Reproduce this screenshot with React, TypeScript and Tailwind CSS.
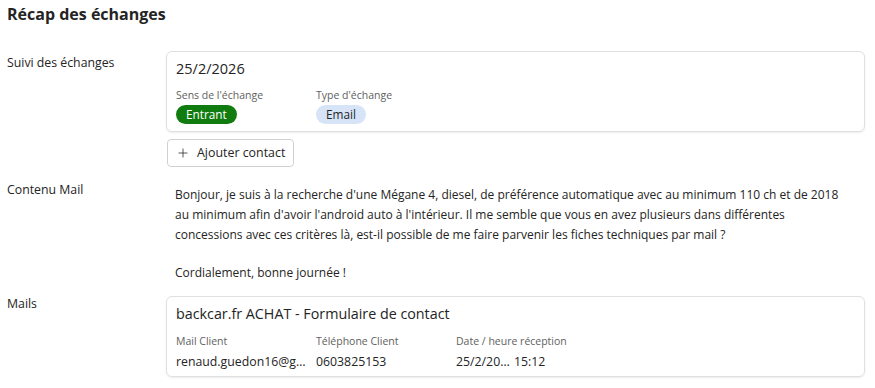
import { Plus } from 'lucide-react';

const font = { fontFamily: '"Open Sans", "Noto Sans", sans-serif' };

function Field({ label, gap = 'gap-[3px]', children }: { label: string; gap?: string; children: React.ReactNode }) {
  return (
    <div className={`flex flex-col ${gap}`}>
      <span className="text-[10.5px] leading-[14px] text-[#616161]">{label}</span>
      {children}
    </div>
  );
}

export default function App() {
  return (
    <div className="w-[875px] h-[388px] bg-white text-[#242424] pl-[7px] pr-[10px] pt-[3px] overflow-hidden" style={font}>
      <h1 className="text-[16px] leading-[22px] font-bold">Récap des échanges</h1>

      <div className="grid grid-cols-[159px_1fr] mt-[26px]">
        {/* Suivi */}
        <div className="pt-[3px] text-[12.3px] leading-[18px]">Suivi des échanges</div>
        <div className="flex flex-col items-start">
          <div className="w-full rounded-[6px] border border-[#e0e0e0] shadow-[0_1px_2px_rgba(0,0,0,0.08)] px-[9px] pt-[6px] pb-[7px]">
            <div className="text-[14.5px] leading-[22px]">25/2/2026</div>
            <div className="flex mt-[8px]">
              <div className="w-[140px]">
                <Field label="Sens de l'échange">
                  <span className="self-start rounded-full bg-[#107c10] text-white text-[11.8px] leading-[19px] px-[10px]">Entrant</span>
                </Field>
              </div>
              <Field label="Type d'échange">
                <span className="self-start rounded-full bg-[#d7e4f8] text-[#242424] text-[11.8px] leading-[19px] px-[10px]">Email</span>
              </Field>
            </div>
          </div>
          <button className="mt-[7px] ml-px h-[28px] flex items-center gap-[7px] pl-[8px] pr-[8px] rounded-[4px] border border-[#d1d1d1] bg-white text-[12.4px] text-[#242424]">
            <Plus size={14} strokeWidth={1.3} />
            Ajouter contact
          </button>
        </div>

        {/* Contenu */}
        <div className="pt-[14px] text-[12.3px] leading-[18px]">Contenu Mail</div>
        <div className="pt-[18px] pl-[9px] text-[12px] leading-[20px]">
          <p>
            Bonjour, je suis à la recherche d'une Mégane 4, diesel, de préférence automatique avec au minimum 110 ch et de 2018
            <br />
            au minimum afin d'avoir l'android auto à l'intérieur. Il me semble que vous en avez plusieurs dans différentes
            <br />
            concessions avec ces critères là, est-il possible de me faire parvenir les fiches techniques par mail ?
          </p>
          <p className="mt-[18px]">Cordialement, bonne journée !</p>
        </div>

        {/* Mails */}
        <div className="pt-[12px] text-[12.3px] leading-[18px]">Mails</div>
        <div className="pt-[13px]">
          <div className="rounded-[6px] border border-[#e0e0e0] shadow-[0_1px_2px_rgba(0,0,0,0.08)] px-[9px] pt-[6px] pb-[5px]">
            <div className="text-[14.3px] leading-[22px]">backcar.fr ACHAT - Formulaire de contact</div>
            <div className="flex mt-[9px] text-[12.3px] leading-[18px]">
              <div className="w-[140px]">
                <Field label="Mail Client" gap="gap-[5px]">
                  <span className="block w-[133px] truncate">renaud.guedon16@gmail.com</span>
                </Field>
              </div>
              <div className="w-[140px]">
                <Field label="Téléphone Client" gap="gap-[5px]">
                  <span>0603825153</span>
                </Field>
              </div>
              <Field label="Date / heure réception" gap="gap-[5px]">
                <div className="flex gap-[1px]">
                  <span className="block w-[57px] truncate">25/2/2026</span>
                  <span>15:12</span>
                </div>
              </Field>
            </div>
          </div>
        </div>
      </div>
    </div>
  );
}
